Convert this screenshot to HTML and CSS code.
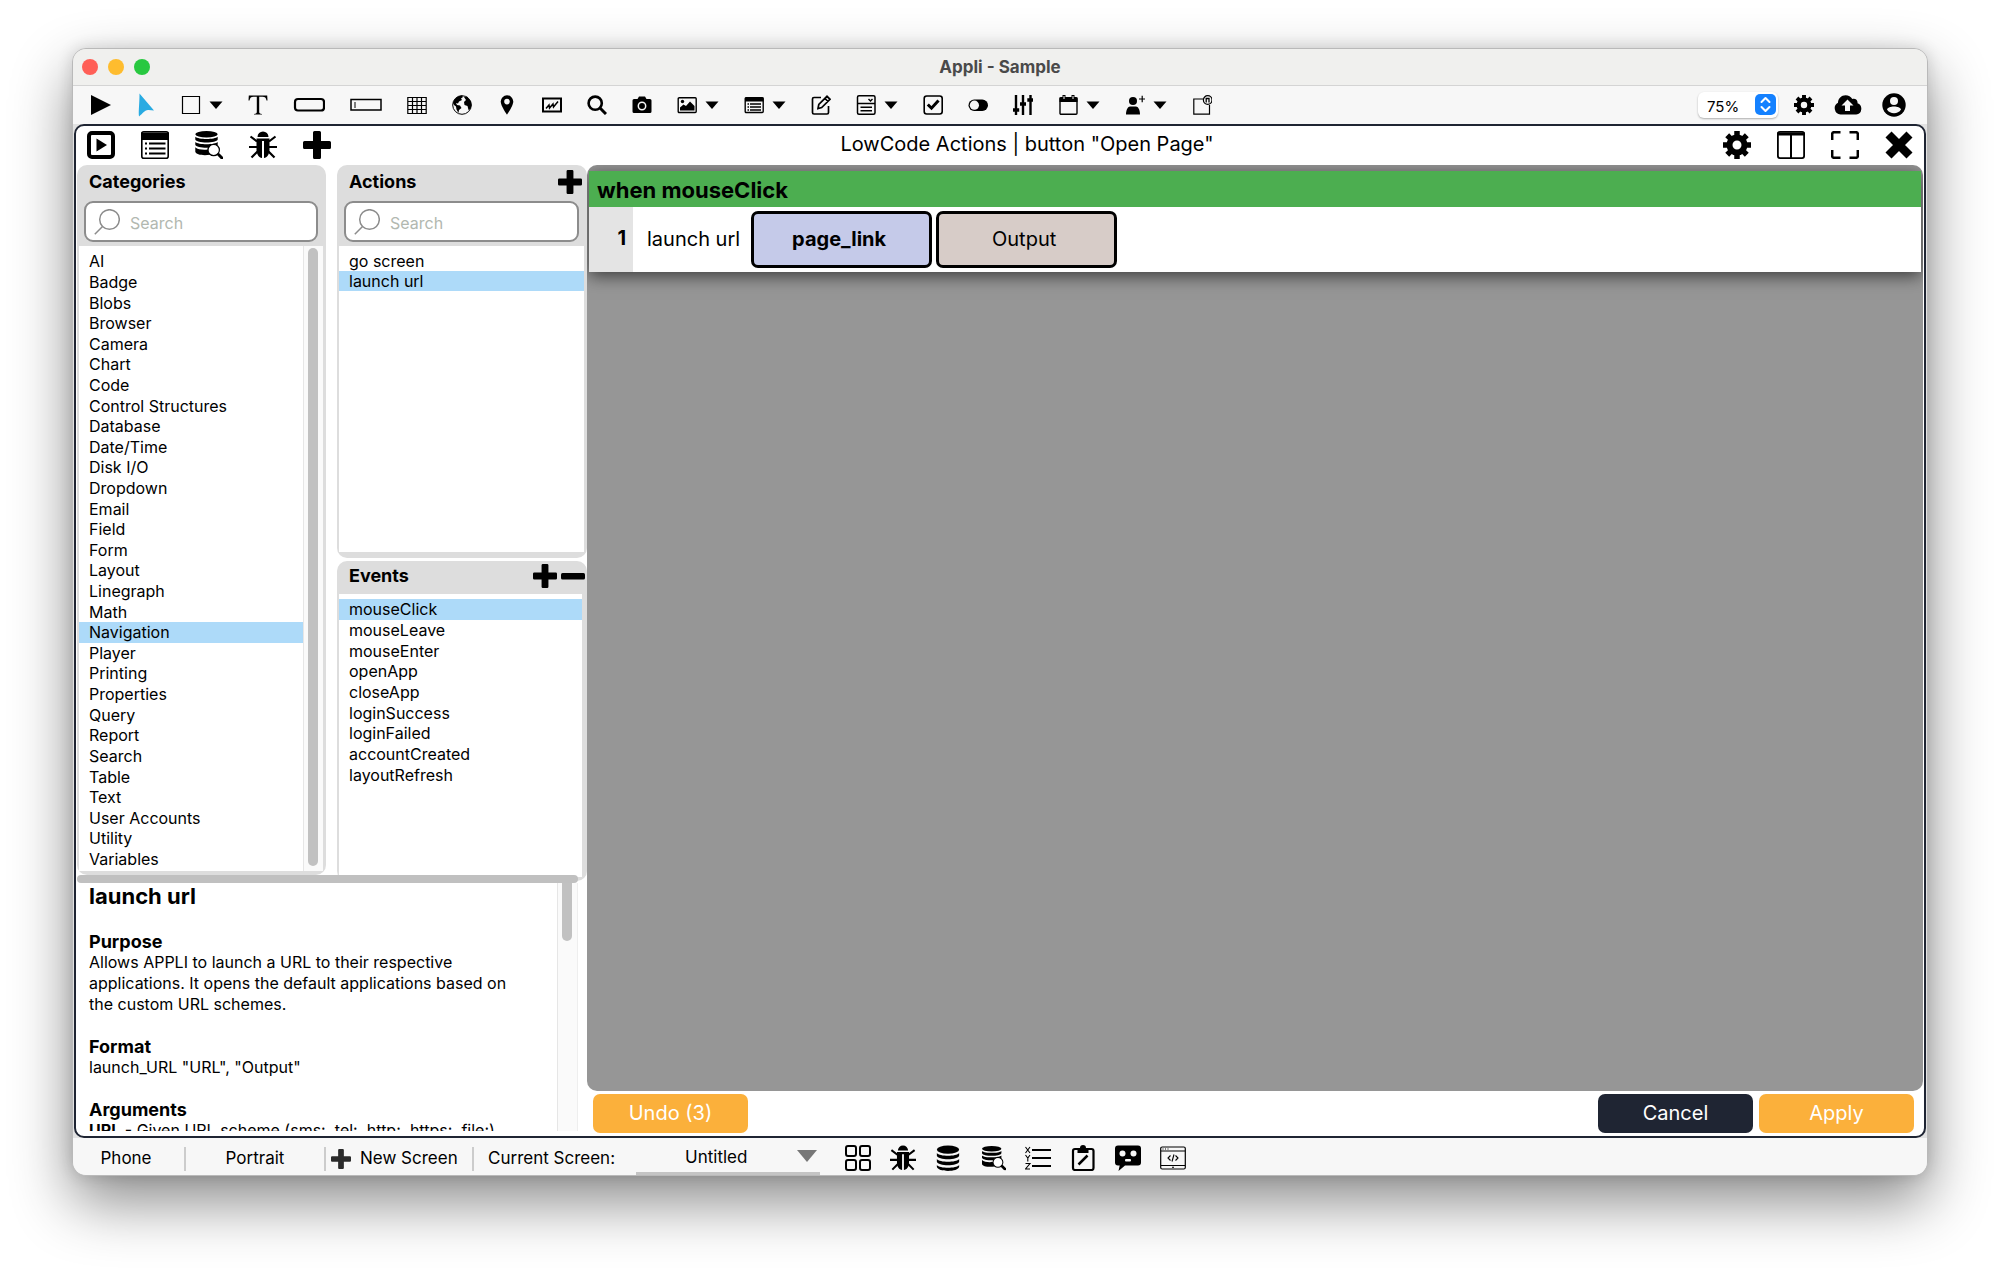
FILE: index.html
```html
<!DOCTYPE html>
<html lang="en">
<head>
<meta charset="utf-8">
<title>Appli - Sample</title>
<link rel="stylesheet" href="styles.css">
</head>
<body>
<svg class="sprite" aria-hidden="true">
  <symbol id="caret" viewBox="0 0 14 20"><path d="M.5 6.500h13L7 14z"/></symbol>
  <symbol id="plus" viewBox="0 0 28 28"><path d="M11.500 0h5a1.500 1.500 0 0 1 1.500 1.500V10h8.500a1.500 1.500 0 0 1 1.500 1.500v5a1.500 1.500 0 0 1-1.500 1.500H18v8.500a1.500 1.500 0 0 1-1.500 1.500h-5a1.500 1.500 0 0 1-1.500-1.500V18H1.500A1.500 1.500 0 0 1 0 16.500v-5A1.500 1.500 0 0 1 1.500 10H10V1.500A1.500 1.500 0 0 1 11.500 0z"/></symbol>
  <symbol id="gear" viewBox="0 0 28 28"><g fill="none" stroke="#000" stroke-width="6"><circle cx="14" cy="14" r="7.500"/><path stroke-width="5.500" d="M14 5V0M14 23v5M5 14H0M23 14h5M7.600 7.600 4.200 4.200M20.400 20.400l3.400 3.400M7.600 20.400l-3.400 3.400M20.400 7.600l3.400-3.400"/></g></symbol>
  <symbol id="bug" viewBox="0 0 28 28"><path d="M8.500 6a5.500 5.500 0 0 1 11 0zM7.500 7.500h13v11c0 5-2.500 8-5.500 8.500V10h-2v17c-3-.500-5.500-3.500-5.500-8.500z"/><path d="m1.500 5.500 6.500 5M26.500 5.500l-6.500 5M0 16h8M28 16h-8M2.500 26.500l6-6M25.500 26.500l-6-6" fill="none" stroke="#000" stroke-width="2.200"/></symbol>
  <symbol id="db" viewBox="0 0 28 28"><ellipse cx="14" cy="5" rx="12" ry="4.500"/><path d="M2 8.500c3 4 21 4 24 0v3c-1 5-23 5-24 0zM2 15c3 4 21 4 24 0v3c-1 5-23 5-24 0zM2 21.500c3 4 21 4 24 0v2c-1 6-23 6-24 0z"/></symbol>
  <symbol id="dbsearch" viewBox="0 0 28 28"><ellipse cx="11.500" cy="3.300" rx="11.200" ry="3.200"/><path d="M.300 5.800c3 3 19.500 3 22.400 0v2.700c-1 4-21.400 4-22.400 0zM.300 11c3 3 19.500 3 22.400 0v2.700c-1 4-21.400 4-22.400 0zM.300 16.300c3 3 12 3 14.700 1.500v6c-7 1-14 0-14.700-3z"/><circle cx="18.700" cy="19" r="5.700" fill="#fff" stroke="#000" stroke-width="1.200"/><path d="m23.500 23.500 3.500 3.500" fill="none" stroke="#000" stroke-width="3" stroke-linecap="round"/></symbol>
</svg>

<div class="window">
  <header class="titlebar">
    <div class="lights"><span class="light red"></span><span class="light amber"></span><span class="light green"></span></div>
    <h1 class="window-title">Appli - Sample</h1>
  </header>

  <nav class="toolbar" aria-label="Tools">
    <button class="tool" aria-label="Run"><svg width="20" height="20" viewBox="0 0 20 20"><path d="M0 0v20l20-10z"/></svg></button>
    <button class="tool" aria-label="Pointer"><svg width="20" height="24" viewBox="0 0 20 24"><path fill="#29abe2" d="M3.500.500 18 17.500l-5.500-.500c-3-.500-5.500 3-9.500 6.500-.700-5 .500-12 .500-23z"/></svg></button>
    <div class="tool-group">
      <button class="tool" aria-label="Shape"><svg width="20" height="20" viewBox="0 0 20 20"><path fill="none" stroke="#000" stroke-width="1.200" d="M1.500 1.500h17v17h-17z"/></svg></button>
      <button class="tool" aria-label="More shapes"><svg width="14" height="20"><use href="#caret"/></svg></button>
    </div>
    <button class="tool" aria-label="Text"><svg width="20" height="20" viewBox="0 0 20 20"><path d="M.800.500h18.400l.300 5h-1c-.500-2.900-1.500-3.800-4-3.800h-3.300v15c0 1.500.500 2 2.800 2.200v.600H6v-.600c2.300-.200 2.800-.700 2.800-2.200v-15H5.500c-2.500 0-3.500.900-4 3.800h-1z"/></svg></button>
    <button class="tool" aria-label="Button"><svg width="32" height="20" viewBox="0 0 32 20"><rect x="2" y="4" width="29" height="11.500" rx="3" fill="none" stroke="#000" stroke-width="2.200"/></svg></button>
    <button class="tool" aria-label="Input field"><svg width="32" height="20" viewBox="0 0 32 20"><path fill="none" stroke="#000" stroke-width="1.500" d="M1 4.500h30V15H1z"/><path stroke="#000" d="M5 7v6"/></svg></button>
    <button class="tool" aria-label="Table"><svg width="20" height="20" viewBox="0 0 20 20"><path fill="none" stroke="#000" stroke-width="1.200" d="M.800 2.500h18.400v16H.800zM.800 6.500h18.400M.800 10.500h18.400M.800 14.500h18.400M5.500 2.500v16M10 2.500v16M14.500 2.500v16"/></svg></button>
    <button class="tool" aria-label="Browser"><svg width="20" height="20" viewBox="0 0 20 20"><circle cx="10" cy="10" r="9.300" fill="none" stroke="#000"/><path d="M1 8c1-4 4-7 9-7.500l1 1.500-2 1.500 1 1.500-3 1.500-1 2-2-.500 1 2 3 .500 1.500 2.500-2.500 2-.500 3-2-3.500-.500-3L2 10zM12 2l3-.500 4 5 .500 4-1 3.500-2 1-1-4-3-1-.500-3 2-2z"/></svg></button>
    <button class="tool" aria-label="Map"><svg width="20" height="20" viewBox="0 0 20 20"><path fill-rule="evenodd" d="M10 .300a6.300 6.300 0 0 1 6.300 6.300c0 4.400-6.300 13.200-6.300 13.200S3.700 11 3.700 6.600A6.300 6.300 0 0 1 10 .300zm0 3.500a2.800 2.800 0 1 0 0 5.600 2.800 2.800 0 0 0 0-5.600z"/></svg></button>
    <button class="tool" aria-label="Chart"><svg width="20" height="20" viewBox="0 0 20 20"><path fill="none" stroke="#000" stroke-width="2" d="M1 3.500h18v13H1z"/><path fill="none" stroke="#000" stroke-width="1.500" d="m4 13.500 3-3.500.500 3 3.500-4 .500 3L16 6.500"/></svg></button>
    <button class="tool" aria-label="Search"><svg width="20" height="20" viewBox="0 0 20 20"><circle cx="8.200" cy="8.200" r="6.600" fill="none" stroke="#000" stroke-width="2.600"/><path stroke="#000" stroke-width="3" d="m13 13 6 6"/></svg></button>
    <button class="tool" aria-label="Camera"><svg width="20" height="20" viewBox="0 0 20 20"><path d="M2 4h3.500L7 1.500h6L14.500 4H18a1.500 1.500 0 0 1 1.500 1.500v11A1.500 1.500 0 0 1 18 18H2a1.500 1.500 0 0 1-1.500-1.500v-11A1.500 1.500 0 0 1 2 4z"/><circle cx="10" cy="11" r="3.700" fill="none" stroke="#f7f7f7" stroke-width="1.500"/></svg></button>
    <div class="tool-group">
      <button class="tool" aria-label="Image"><svg width="20" height="20" viewBox="0 0 20 20"><rect x="1.200" y="2.700" width="18" height="14.800" rx="1" fill="none" stroke="#000" stroke-width="1.400"/><circle cx="5.500" cy="6.500" r="1.700"/><path d="M3 15.500v-3l3.500-3L9 11l4-4.500 4.500 4.500v4.500z"/></svg></button>
      <button class="tool" aria-label="More media"><svg width="14" height="20"><use href="#caret"/></svg></button>
    </div>
    <div class="tool-group">
      <button class="tool" aria-label="List"><svg width="20" height="20" viewBox="0 0 20 20"><rect x="1.200" y="2.700" width="18" height="14.800" rx="1" fill="none" stroke="#000" stroke-width="1.400"/><path d="M1 2.500h18.500v4H1z"/><path stroke="#000" stroke-width="1.500" d="M3.500 9h1.500M6 9h11M3.500 12h1.500M6 12h11M3.500 15h1.500M6 15h11"/></svg></button>
      <button class="tool" aria-label="More lists"><svg width="14" height="20"><use href="#caret"/></svg></button>
    </div>
    <button class="tool" aria-label="Edit"><svg width="20" height="20" viewBox="0 0 20 20"><path fill="none" stroke="#000" stroke-width="1.700" d="M10 2.500H3A1.500 1.500 0 0 0 1.500 4v13.500A1.500 1.500 0 0 0 3 19h13a1.500 1.500 0 0 0 1.500-1.500V11M7 13.500l.800-4L16 1.300l3 3-8.300 8.300zM14 3.500l3 3"/></svg></button>
    <div class="tool-group">
      <button class="tool" aria-label="Form"><svg width="20" height="20" viewBox="0 0 20 20"><rect x="1.500" y=".800" width="17.500" height="18.400" rx="1.500" fill="none" stroke="#000" stroke-width="1.500"/><path fill="none" stroke="#000" stroke-width="1.400" d="M1.500 8.500H19M12.500 4l2 2 2-2M4.500 12.200H16M4.500 15.700H16"/></svg></button>
      <button class="tool" aria-label="More fields"><svg width="14" height="20"><use href="#caret"/></svg></button>
    </div>
    <button class="tool" aria-label="Check box"><svg width="20" height="20" viewBox="0 0 20 20"><rect x="1.200" y="1" width="18" height="18" rx="2.500" fill="none" stroke="#000" stroke-width="1.600"/><path fill="none" stroke="#000" stroke-width="3" d="m4.800 9.500 3.700 3.700L15.500 5.500"/></svg></button>
    <button class="tool" aria-label="Switch"><svg width="20" height="20" viewBox="0 0 20 20"><rect x=".500" y="4.500" width="19.500" height="11.500" rx="5.700"/><circle cx="6.400" cy="10.200" r="4.600" fill="#f7f7f7"/></svg></button>
    <button class="tool" aria-label="Sliders"><svg width="20" height="20" viewBox="0 0 20 20"><path stroke="#000" stroke-width="2.400" d="M3 0v20M10 0v20M17.500 0v20"/><path stroke="#000" stroke-width="3.500" d="M0 15h6.200M7 9h6M14.300 5h6"/></svg></button>
    <div class="tool-group">
      <button class="tool" aria-label="Calendar"><svg width="20" height="20" viewBox="0 0 20 20"><rect x="2" y="2.800" width="17" height="16.500" rx="1" fill="none" stroke="#000" stroke-width="1.400"/><path d="M1.500 2.500h18v4.500h-18zM4.500 0h3v4h-3zM13.500 0h3v4h-3z"/><path stroke="#f7f7f7" d="M6 1v3M15 1v3"/></svg></button>
      <button class="tool" aria-label="More date fields"><svg width="14" height="20"><use href="#caret"/></svg></button>
    </div>
    <div class="tool-group">
      <button class="tool" aria-label="Add user"><svg width="20" height="20" viewBox="0 0 20 20"><circle cx="8" cy="6" r="4"/><path d="M1 19.500c0-5 2-8 4-8h6c2 0 4 3 4 8z"/><path stroke="#000" stroke-width="1.200" d="M14 4h6.500M17.200.800v6.500"/></svg></button>
      <button class="tool" aria-label="More user tools"><svg width="14" height="20"><use href="#caret"/></svg></button>
    </div>
    <button class="tool" aria-label="Widget"><svg width="20" height="20" viewBox="0 0 20 20"><path fill="none" stroke="#000" stroke-width="1.200" d="M11 4H1.800v15.200h15.700V10"/><circle cx="15.700" cy="5" r="4.300" fill="none" stroke="#000" stroke-width="1.200"/><path fill="none" stroke="#000" stroke-width="1.300" d="M14.200 7.500v-4h2.800v4"/></svg></button>

    <div class="toolbar-end">
      <div class="zoom">
        <select class="zoom-select" aria-label="Zoom"><option>75%</option><option>100%</option></select>
        <svg class="zoom-step" width="21" height="21" viewBox="0 0 21 21"><rect width="21" height="21" rx="5" fill="#1481ff"/><path fill="none" stroke="#fff" stroke-width="2" stroke-linecap="round" stroke-linejoin="round" d="m6.500 8 4-4 4 4M6.500 13l4 4 4-4"/></svg>
      </div>
      <button class="tool" aria-label="Settings"><svg width="20" height="20"><use href="#gear"/></svg></button>
      <button class="tool" aria-label="Upload"><svg width="28" height="20" viewBox="0 0 28 20"><path d="M6.500 19.500A6.300 6.300 0 0 1 4 7.700C4 3.500 7.500.300 11.500.300c3 0 5.500 1.500 6.800 3.700 3-1 5.700 1.200 5.200 4.300a5.800 5.800 0 0 1-1.300 11.200z"/><path fill="#f7f7f7" d="m13.500 4.500 6 6H16v5.500h-5v-5.500H7.500z"/></svg></button>
      <button class="tool" aria-label="Account"><svg width="24" height="24" viewBox="0 0 24 24"><circle cx="12" cy="12" r="11.700"/><circle cx="12" cy="8" r="4" fill="#f7f7f7"/><path fill="#f7f7f7" d="M5 16.500c1-4 13-4 14 0-3 5-11 5-14 0z"/></svg></button>
    </div>
  </nav>

  <main class="workspace">
    <header class="editor-head">
      <div class="head-icons">
        <button class="tool" aria-label="Preview"><svg width="28" height="28" viewBox="0 0 28 28"><rect x="2" y="2" width="24" height="24" rx="3" fill="none" stroke="#000" stroke-width="4"/><path d="M9.500 7.500v13L20 14z"/></svg></button>
        <button class="tool" aria-label="Outline"><svg width="28" height="28" viewBox="0 0 28 28"><rect x=".800" y=".800" width="26.400" height="26.400" rx="2" fill="none" stroke="#000" stroke-width="1.600"/><path d="M0 1.500h28V9H0z"/><path stroke="#000" stroke-width="2" d="M4 12.500h2M8 12.500h16.500M4 17.500h2M8 17.500h16.500M4 22.500h2M8 22.500h16.500"/></svg></button>
        <button class="tool" aria-label="Inspect data"><svg width="28" height="28"><use href="#dbsearch"/></svg></button>
        <button class="tool" aria-label="Debug"><svg width="28" height="28"><use href="#bug"/></svg></button>
        <button class="tool" aria-label="Add"><svg width="28" height="28"><use href="#plus"/></svg></button>
      </div>
      <h2 class="editor-title">LowCode Actions | button "Open Page"</h2>
      <div class="head-icons">
        <button class="tool" aria-label="Editor settings"><svg width="28" height="28"><use href="#gear"/></svg></button>
        <button class="tool" aria-label="Columns"><svg width="28" height="28" viewBox="0 0 28 28"><rect x=".900" y=".900" width="26.200" height="26.200" rx="2" fill="none" stroke="#000" stroke-width="1.800"/><path d="M0 1.500h28v3H0z"/><path stroke="#000" stroke-width="2" d="M14 3v24"/></svg></button>
        <button class="tool" aria-label="Full screen"><svg width="28" height="28" viewBox="0 0 28 28"><path fill="none" stroke="#000" stroke-width="2.500" d="M1.200 9V3a1.800 1.800 0 0 1 1.800-1.800h6.500M18.500 1.200H25A1.800 1.800 0 0 1 26.800 3v6M26.800 19v6a1.800 1.800 0 0 1-1.800 1.800h-6.500M9.500 26.800H3A1.800 1.800 0 0 1 1.200 25v-6"/></svg></button>
        <button class="tool" aria-label="Close"><svg width="28" height="28" viewBox="0 0 28 28"><path fill="none" stroke="#000" stroke-width="8.500" stroke-linejoin="round" d="m3.500 3.500 21 21M24.500 3.500l-21 21"/></svg></button>
      </div>
    </header>

    <div class="editor-body">
      <div class="side">
        <div class="panels">
          <section class="panel">
            <div class="panel-head"><h3 class="heading">Categories</h3></div>
            <label class="search"><svg width="26" height="26" viewBox="0 0 26 26"><g fill="none" stroke="#8c8c8c" stroke-width="1.500"><circle cx="15.500" cy="10.500" r="9.800"/><path d="M8.500 17.500.800 25.200"/></g></svg><input class="search-input" type="text" placeholder="Search" aria-label="Search categories"></label>
            <div class="list-wrap">
              <ul class="list list-fill">
                <li><button class="item">AI</button></li>
                <li><button class="item">Badge</button></li>
                <li><button class="item">Blobs</button></li>
                <li><button class="item">Browser</button></li>
                <li><button class="item">Camera</button></li>
                <li><button class="item">Chart</button></li>
                <li><button class="item">Code</button></li>
                <li><button class="item">Control Structures</button></li>
                <li><button class="item">Database</button></li>
                <li><button class="item">Date/Time</button></li>
                <li><button class="item">Disk I/O</button></li>
                <li><button class="item">Dropdown</button></li>
                <li><button class="item">Email</button></li>
                <li><button class="item">Field</button></li>
                <li><button class="item">Form</button></li>
                <li><button class="item">Layout</button></li>
                <li><button class="item">Linegraph</button></li>
                <li><button class="item">Math</button></li>
                <li><button class="item selected">Navigation</button></li>
                <li><button class="item">Player</button></li>
                <li><button class="item">Printing</button></li>
                <li><button class="item">Properties</button></li>
                <li><button class="item">Query</button></li>
                <li><button class="item">Report</button></li>
                <li><button class="item">Search</button></li>
                <li><button class="item">Table</button></li>
                <li><button class="item">Text</button></li>
                <li><button class="item">User Accounts</button></li>
                <li><button class="item">Utility</button></li>
                <li><button class="item">Variables</button></li>
              </ul>
              <div class="track"><div class="thumb thumb-full"></div></div>
            </div>
          </section>

          <div class="panel-column">
            <section class="panel panel-actions">
              <div class="panel-head"><h3 class="heading">Actions</h3>
                <button class="tool" aria-label="Add action"><svg width="24" height="24"><use href="#plus"/></svg></button></div>
              <label class="search"><svg width="26" height="26" viewBox="0 0 26 26"><g fill="none" stroke="#8c8c8c" stroke-width="1.500"><circle cx="15.500" cy="10.500" r="9.800"/><path d="M8.500 17.500.800 25.200"/></g></svg><input class="search-input" type="text" placeholder="Search" aria-label="Search actions"></label>
              <div class="list-wrap">
                <ul class="list">
                  <li><button class="item">go screen</button></li>
                  <li><button class="item selected">launch url</button></li>
                </ul>
              </div>
            </section>
            <section class="panel panel-events">
              <div class="panel-head"><h3 class="heading">Events</h3>
                <button class="tool" aria-label="Add event"><svg width="24" height="24"><use href="#plus"/></svg></button>
                <button class="tool" aria-label="Remove event"><svg width="24" height="24" viewBox="0 0 24 24"><rect y="9" width="24" height="6.500" rx="1.500"/></svg></button></div>
              <div class="list-wrap">
                <ul class="list list-events">
                  <li><button class="item selected">mouseClick</button></li>
                  <li><button class="item">mouseLeave</button></li>
                  <li><button class="item">mouseEnter</button></li>
                  <li><button class="item">openApp</button></li>
                  <li><button class="item">closeApp</button></li>
                  <li><button class="item">loginSuccess</button></li>
                  <li><button class="item">loginFailed</button></li>
                  <li><button class="item">accountCreated</button></li>
                  <li><button class="item">layoutRefresh</button></li>
                </ul>
              </div>
            </section>
          </div>
        </div>

        <div class="splitter" role="separator"></div>

        <div class="help">
          <article class="help-text">
            <h3 class="help-title">launch url</h3>
            <h4 class="heading">Purpose</h4>
            <p>Allows APPLI to launch a URL to their respective applications. It opens the default applications based on the custom URL schemes.</p>
            <h4 class="heading">Format</h4>
            <p>launch_URL "URL", "Output"</p>
            <h4 class="heading">Arguments</h4>
            <p><b>URL</b> - Given URL scheme (sms:, tel:, http:, https:, file:)</p>
          </article>
          <div class="track track-help"><div class="thumb thumb-help"></div></div>
        </div>
      </div>

      <div class="editor">
        <div class="canvas">
          <section class="handler">
            <h3 class="handler-title">when mouseClick</h3>
            <div class="step">
              <span class="step-number">1</span>
              <span class="step-name">launch url</span>
              <button class="param param-link">page_link</button>
              <button class="param param-output">Output</button>
            </div>
          </section>
        </div>
        <footer class="actions">
          <button class="btn btn-orange">Undo (3)</button>
          <button class="btn btn-dark">Cancel</button>
          <button class="btn btn-orange">Apply</button>
        </footer>
      </div>
    </div>
  </main>

  <footer class="status">
    <button class="status-cell status-device">Phone</button>
    <button class="status-cell status-layout">Portrait</button>
    <button class="status-cell status-new"><svg width="20" height="20" fill="#2b2b2b"><use href="#plus"/></svg>New Screen</button>
    <label class="status-label" for="screen">Current Screen:</label>
    <div class="screen">
      <select class="screen-select" id="screen"><option>Untitled</option></select>
      <svg class="screen-caret" width="20" height="12" viewBox="0 0 20 12"><path fill="#777" d="M0 0h20L10 12z"/></svg>
    </div>
    <div class="status-icons">
      <button class="tool" aria-label="Screens"><svg width="26" height="26" viewBox="0 0 26 26"><g fill="none" stroke="#000" stroke-width="2"><rect x="1" y="1" width="10" height="10" rx="2"/><rect x="15" y="1" width="10" height="10" rx="2"/><rect x="1" y="15" width="10" height="10" rx="2"/><rect x="15" y="15" width="10" height="10" rx="2"/></g></svg></button>
      <button class="tool" aria-label="Debugger"><svg width="26" height="26"><use href="#bug"/></svg></button>
      <button class="tool" aria-label="Database"><svg width="26" height="26"><use href="#db"/></svg></button>
      <button class="tool" aria-label="Query data"><svg width="26" height="26" viewBox="-2 0 30 28"><use href="#dbsearch" width="28" height="28"/></svg></button>
      <button class="tool" aria-label="Variables"><svg width="26" height="26" viewBox="0 0 26 26"><path fill="none" stroke="#000" stroke-width="2" d="M7 5h19M7 13h19M7 21h19"/><path fill="none" stroke="#000" stroke-width="1.100" d="m.500 2 4.500 6M5 2 .500 8M.500 10l2.300 3L5 10M2.800 13v3.500M.500 18.500H5L.500 24H5"/></svg></button>
      <button class="tool" aria-label="Tasks"><svg width="26" height="26" viewBox="0 0 26 26"><rect x="3" y="4" width="20.500" height="21" rx="2" fill="none" stroke="#000" stroke-width="2.200"/><path d="M7.500 3H10a3 3 0 0 1 6 0h2.500v5h-11z"/><path stroke="#000" stroke-width="2.500" d="m8.500 19.500 9-9"/></svg></button>
      <button class="tool" aria-label="Assistant"><svg width="26" height="26" viewBox="0 0 26 26"><path d="M3 .500h20a3 3 0 0 1 3 3v14a3 3 0 0 1-3 3H10L3.500 26l1.200-5.500H3a3 3 0 0 1-3-3v-14a3 3 0 0 1 3-3z"/><g fill="#f7f7f7"><circle cx="7.500" cy="8.500" r="3"/><circle cx="18.500" cy="8.500" r="3"/><rect x="10" y="14" width="6" height="2.500" rx="1"/></g></svg></button>
      <button class="tool" aria-label="Code"><svg width="26" height="26" viewBox="0 0 26 26"><rect x=".700" y="2" width="24.600" height="22" rx="1.500" fill="none" stroke="#000" stroke-width="1.200"/><path fill="none" stroke="#000" stroke-width="1.100" d="M1 6h24M1 20.500h24M10.500 10.500 8 13l2.500 2.500M15.500 10.500 18 13l-2.500 2.500M14 9.500l-2 7M2.500 4h1M5 4h1M7.500 4h1M12 22.300h2"/></svg></button>
    </div>
  </footer>
</div>
</body>
</html>
```
FILE: styles.css
```css
* { box-sizing: border-box; }

body {
  margin: 0;
  min-height: 100vh;
  padding: 48px 72px 96px;
  background: #fff;
  color: #000;
  font: 16px/21px Inter, "Noto Sans", sans-serif;
  overflow: hidden;
}

h1, h2, h3, h4, p, ul { margin: 0; padding: 0; }
ul { list-style: none; }
svg { display: block; }
button, input, select { font: inherit; color: inherit; border: 0; background: none; padding: 0; margin: 0; }
.sprite { display: none; }

.window {
  display: flex;
  flex-direction: column;
  height: calc(100vh - 144px);
  border: 1px solid #b9b9b9;
  border-radius: 14px;
  background: #e2e2e2;
  box-shadow: 0 26px 60px rgba(0, 0, 0, .46), 0 0 16px rgba(0, 0, 0, .14);
  overflow: hidden;
}

/* Title bar */
.titlebar {
  display: grid;
  grid-template-columns: 1fr auto 1fr;
  align-items: center;
  flex: 0 0 37px;
  padding: 0 9px;
  background: #f0f0ee;
  border-bottom: 1px solid #d4d4d4;
}
.lights { display: flex; gap: 10px; }
.light { width: 16px; height: 16px; border-radius: 50%; }
.red { background: #ff5f57; }
.amber { background: #febc2e; }
.green { background: #28c840; }
.window-title { font-size: 17px; font-weight: 700; color: #4a4a4a; }

/* Toolbar */
.toolbar {
  display: flex;
  align-items: center;
  gap: 25px;
  flex: 0 0 38px;
  padding: 0 21px 0 18px;
  background: #f7f7f7;
}
.tool { display: block; flex: none; }
.tool-group { display: flex; gap: 8px; }
.toolbar-end { display: flex; align-items: center; gap: 20px; margin-left: auto; }
.zoom { position: relative; margin-right: -4px; }
.zoom-select {
  appearance: none;
  display: block;
  width: 80px;
  height: 26px;
  padding: 3px 0 0 9px;
  border-radius: 6px;
  background: #fff;
  box-shadow: 0 1px 2px rgba(0, 0, 0, .3);
  font-size: 15px;
}
.zoom-step { position: absolute; top: 2px; right: 2px; pointer-events: none; }

/* Editor frame */
.workspace {
  display: flex;
  flex-direction: column;
  flex: 1;
  min-height: 0;
  margin: 0 1px;
  border: 2px solid #1f2533;
  border-radius: 10px;
  background: #fff;
  overflow: hidden;
}
.editor-head { display: flex; align-items: center; flex: 0 0 39px; padding: 0 11px 2px; }
.head-icons { display: flex; gap: 26px; }
.editor-title { flex: 1; text-align: center; font-size: 20px; font-weight: 400; }
.editor-body { display: flex; flex: 1; min-height: 0; padding: 0 1px; }
.side { display: flex; flex-direction: column; flex: 0 0 510px; min-height: 0; }

/* Category, action and event panels */
.panels { display: grid; grid-template-columns: 249px 250px; gap: 11px; flex: 711 1 0; min-height: 0; }
.panel { display: flex; flex-direction: column; min-height: 0; padding: 0 3px 4px 2px; background: #ddd; border-radius: 10px; }
.panel-column { display: flex; flex-direction: column; gap: 3px; min-height: 0; margin-bottom: -6px; }
.panel-actions { flex: 393 1 0; padding-bottom: 6px; }
.panel-events { flex: 321 1 0; padding-right: 5px; }
.panel-head { display: flex; align-items: center; gap: 4px; flex: 0 0 33px; padding: 0 2px 0 10px; }
.panel-events .panel-head { padding: 0 0 4px 10px; margin-right: -3px; }
.heading { flex: 1; font-size: 18px; line-height: 21px; font-weight: 700; }
.search {
  display: flex;
  align-items: center;
  gap: 10px;
  flex: 0 0 41px;
  margin: 3px 5px 4px 5px;
  padding: 0 8px;
  border: 2px solid #8c8c8c;
  border-radius: 9px;
  background: #fff;
}
.search-input { flex: 1; min-width: 0; padding-top: 4px; outline: 0; }
.search-input::placeholder { color: #b2b8b0; opacity: 1; }
.list-wrap { display: flex; flex: 1; min-height: 0; background: #fff; }
.list { flex: 1; min-width: 0; padding: 5px 0 2px; }
.list-fill { display: grid; grid-auto-rows: 1fr; }
.list-events { display: grid; grid-auto-rows: 1fr; height: 193px; }
.list li { display: flex; min-height: 0; }
.item { flex: 1; padding-left: 10px; text-align: left; line-height: 20px; }
.selected { background: #addaf9; }
.track { flex: 0 0 20px; padding: 2px 5px 5px 4px; background: #fafafa; border-left: 1px solid #e6e6e6; }
.thumb { width: 10px; border-radius: 5px; background: #c1c1c1; }
.thumb-full { height: 100%; }

.splitter { flex: 0 0 8px; width: 501px; border-radius: 4px; background: #c0c0c0; }

/* Help text */
.help { display: flex; flex: 248 1 0; min-height: 0; margin: 0 9px 5px 0; }
.help-text { flex: 1; padding: 0 32px 0 12px; overflow: hidden; }
.help-title { margin-bottom: 21px; font-size: 22px; line-height: 27px; font-weight: 700; }
.help-text p { margin-bottom: 21px; }
.track-help { padding-top: 0; border-right: 1px solid #eee; }
.thumb-help { height: 58px; border-radius: 0 0 5px 5px; }

/* Canvas */
.editor { display: flex; flex-direction: column; flex: 1; min-width: 0; }
.canvas { flex: 1; padding: 6px 2px; border-radius: 10px; background: #969696; overflow: hidden; }
.handler { background: #fff; box-shadow: 0 4px 16px rgba(0, 0, 0, .6); }
.handler-title { padding: 2px 8px 0; background: #4cae50; font-size: 22px; line-height: 34px; font-weight: 700; }
.step { display: flex; align-items: center; height: 65px; font-size: 20px; }
.step-number { align-self: stretch; width: 44px; padding-right: 7px; background: #e4e4e4; text-align: right; line-height: 63px; font-weight: 700; }
.step-name { padding: 0 11px 0 14px; }
.param { width: 181px; height: 57px; margin-right: 4px; padding-right: 5px; border: 3px solid #000; border-radius: 7px; }
.param-link { background: #c5cae9; font-weight: 700; }
.param-output { background: #d7ccc8; }

.actions { display: flex; gap: 6px; padding: 3px 9px 3px 6px; }
.btn { width: 155px; height: 39px; border-radius: 7px; font-size: 20px; color: #fff; }
.btn:first-child { margin-right: auto; }
.btn-orange { background: #fbb03b; }
.btn-dark { background: #1f2533; }

/* Status bar */
.status { display: flex; align-items: center; flex: 0 0 37px; background: #f7f7f7; font-size: 17px; }
.status-cell { height: 24px; margin-top: 4px; border-right: 2px solid #ccc; }
.status-device { width: 113px; padding: 0 10px 0 5px; text-align: center; }
.status-layout { width: 140px; }
.status-new { display: flex; align-items: center; gap: 9px; width: 148px; padding-left: 5px; }
.status-label { margin-top: 4px; padding-left: 14px; }
.screen { position: relative; align-self: stretch; margin-left: 21px; }
.screen-select { appearance: none; display: block; width: 184px; height: 37px; padding: 5px 0 0 49px; border-bottom: 3px solid #c4c4c4; }
.screen-caret { position: absolute; top: 12px; right: 3px; pointer-events: none; }
.status-icons { display: flex; gap: 19px; margin: 3px 0 0 25px; }
```
